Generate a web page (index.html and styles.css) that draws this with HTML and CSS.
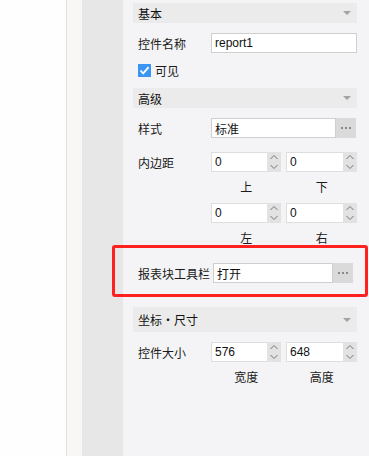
FILE: index.html
```html
<!DOCTYPE html>
<html lang="zh-CN">
<head>
    <meta charset="UTF-8">
    <title>属性面板</title>
    <link rel="stylesheet" href="styles.css">
</head>
<body>
    <div class="layout">
        <div class="canvas"></div>
        <div class="edge"></div>
        <div class="strip"></div>
        <div class="gutter"></div>
        <div class="panel">
            <div class="section-head">基本<span class="caret"></span></div>
            <div class="row">
                <span class="label">控件名称</span>
                <input class="field" type="text" value="report1">
            </div>
            <div class="row check-row">
                <span class="checkbox">
                    <svg width="13" height="13" viewBox="0 0 13 13"><path d="M2.5 6.5 L5.2 9.3 L10.6 3.2" fill="none" stroke="#fff" stroke-width="1.8"/></svg>
                </span>
                <span class="check-text">可见</span>
            </div>

            <div class="section-head">高级<span class="caret"></span></div>
            <div class="row">
                <span class="label">样式</span>
                <div class="picker">
                    <input class="field" type="text" value="标准">
                    <span class="more">
                        <svg width="20" height="20" viewBox="0 0 20 20"><rect x="5" y="9" width="2" height="2" fill="#8a8a8a"/><rect x="9" y="9" width="2" height="2" fill="#8a8a8a"/><rect x="13" y="9" width="2" height="2" fill="#8a8a8a"/></svg>
                    </span>
                </div>
            </div>
            <div class="row spin-row first">
                <span class="label">内边距</span>
                <div class="pair">
                    <div class="spinner"><input type="text" value="0"><span class="spin"></span></div>
                    <div class="spinner"><input type="text" value="0"><span class="spin"></span></div>
                </div>
            </div>
            <div class="row caption-row">
                <span class="label"></span>
                <div class="pair"><span class="caption">上</span><span class="caption">下</span></div>
            </div>
            <div class="row spin-row">
                <span class="label"></span>
                <div class="pair">
                    <div class="spinner"><input type="text" value="0"><span class="spin"></span></div>
                    <div class="spinner"><input type="text" value="0"><span class="spin"></span></div>
                </div>
            </div>
            <div class="row caption-row short">
                <span class="label"></span>
                <div class="pair"><span class="caption">左</span><span class="caption">右</span></div>
            </div>

            <div class="highlight">
                <div class="row">
                    <span class="label wide">报表块工具栏</span>
                    <div class="picker">
                        <input class="field" type="text" value="打开">
                        <span class="more">
                            <svg width="20" height="20" viewBox="0 0 20 20"><rect x="5" y="9" width="2" height="2" fill="#8a8a8a"/><rect x="9" y="9" width="2" height="2" fill="#8a8a8a"/><rect x="13" y="9" width="2" height="2" fill="#8a8a8a"/></svg>
                        </span>
                    </div>
                </div>
            </div>

            <div class="section-head tall">坐标・尺寸<span class="caret"></span></div>
            <div class="row spin-row after-head">
                <span class="label">控件大小</span>
                <div class="pair">
                    <div class="spinner"><input type="text" value="576"><span class="spin"></span></div>
                    <div class="spinner"><input type="text" value="648"><span class="spin"></span></div>
                </div>
            </div>
            <div class="row caption-row">
                <span class="label"></span>
                <div class="pair"><span class="caption">宽度</span><span class="caption">高度</span></div>
            </div>
        </div>
    </div>
</body>
</html>
```

FILE: styles.css
```css
body {
    margin: 0;
    font-family: 'Liberation Sans', 'Noto Sans CJK SC', sans-serif;
    font-size: 12px;
    color: #1a1a1a;
}
.layout {
    display: flex;
    height: 456px;
    overflow: hidden;
}
.canvas,
.edge,
.strip,
.gutter {
    flex-shrink: 0;
}
.canvas {
    width: 66px;
    background-color: #fefefe;
}
.edge {
    width: 1px;
    background-color: #e8dfd3;
}
.strip {
    width: 15px;
    background-color: #f8f7f5;
}
.gutter {
    width: 41px;
    background-color: #e7e7e7;
}
.panel {
    flex: 1;
    min-width: 0;
    background-color: #f4f4f6;
    padding: 3px 12px 0 10px;
    display: flex;
    flex-direction: column;
}
.section-head {
    height: 20px;
    flex-shrink: 0;
    background-color: #ebebeb;
    padding: 0 6px 0 5px;
    display: flex;
    align-items: center;
    justify-content: space-between;
    color: #111;
}
.section-head.tall {
    height: 25px;
    margin-top: 10px;
}
.caret {
    width: 0;
    height: 0;
    border-left: 4px solid transparent;
    border-right: 4px solid transparent;
    border-top: 4px solid #a3a3a3;
}
.row {
    display: flex;
    align-items: center;
    height: 20px;
    flex-shrink: 0;
    margin-top: 10px;
    padding-left: 5px;
}
.label {
    width: 73px;
    flex: 0 0 auto;
    white-space: nowrap;
}
.label.wide {
    width: 75px;
}
.field {
    box-sizing: border-box;
    flex: 1;
    width: 0;
    min-width: 0;
    height: 20px;
    margin: 0;
    padding: 0 3px;
    border: 1px solid #cfcfcf;
    background-color: #fff;
    font-family: inherit;
    font-size: 12px;
    color: #111;
    outline: none;
}
.check-row {
    margin-top: 7px;
    margin-bottom: 8px;
}
.checkbox {
    width: 13px;
    height: 13px;
    background-color: #3b96f3;
    display: flex;
}
.check-text {
    margin-left: 4px;
}
.picker {
    flex: 1;
    min-width: 0;
    display: flex;
    margin-right: 1px;
}
.more {
    width: 20px;
    height: 20px;
    flex-shrink: 0;
    background-color: #dadada;
    display: flex;
}
.spin-row {
    margin-top: 0;
}
.spin-row.first {
    margin-top: 14px;
}
.spin-row.after-head {
    margin-top: 10px;
}
.pair {
    flex: 1;
    min-width: 0;
    display: flex;
    gap: 5px;
}
.spinner {
    display: flex;
    height: 20px;
    flex: 70 1 0;
    min-width: 0;
}
.spinner + .spinner {
    flex-grow: 71;
}
.spinner input {
    box-sizing: border-box;
    flex: 1;
    width: 0;
    min-width: 0;
    height: 20px;
    margin: 0;
    padding: 0 3px;
    border: 1px solid #dedede;
    border-right: none;
    background-color: #fff;
    font-family: inherit;
    font-size: 12px;
    color: #111;
    outline: none;
}
.spin {
    width: 14px;
    height: 20px;
    flex-shrink: 0;
    background-color: #e2e2e2;
    background-image: url("data:image/svg+xml,%3Csvg xmlns='http://www.w3.org/2000/svg' width='14' height='20'%3E%3Cpath d='M3.5 7 L7 3.5 L10.5 7 M3.5 13 L7 16.5 L10.5 13' fill='none' stroke='%23777' stroke-width='1'/%3E%3C/svg%3E");
}
.caption-row {
    margin-top: 0;
    height: 16px;
    padding-top: 6px;
    padding-bottom: 9px;
}
.caption-row.short {
    padding-bottom: 0;
}
.caption {
    flex: 1;
    text-align: center;
}
.highlight {
    flex-shrink: 0;
    margin: 0 -11px 0 -21px;
    padding: 15px 11px 11px 18px;
    border: 3px solid #ff2020;
    border-radius: 3px;
}
.highlight .row {
    margin-top: 0;
}
```
